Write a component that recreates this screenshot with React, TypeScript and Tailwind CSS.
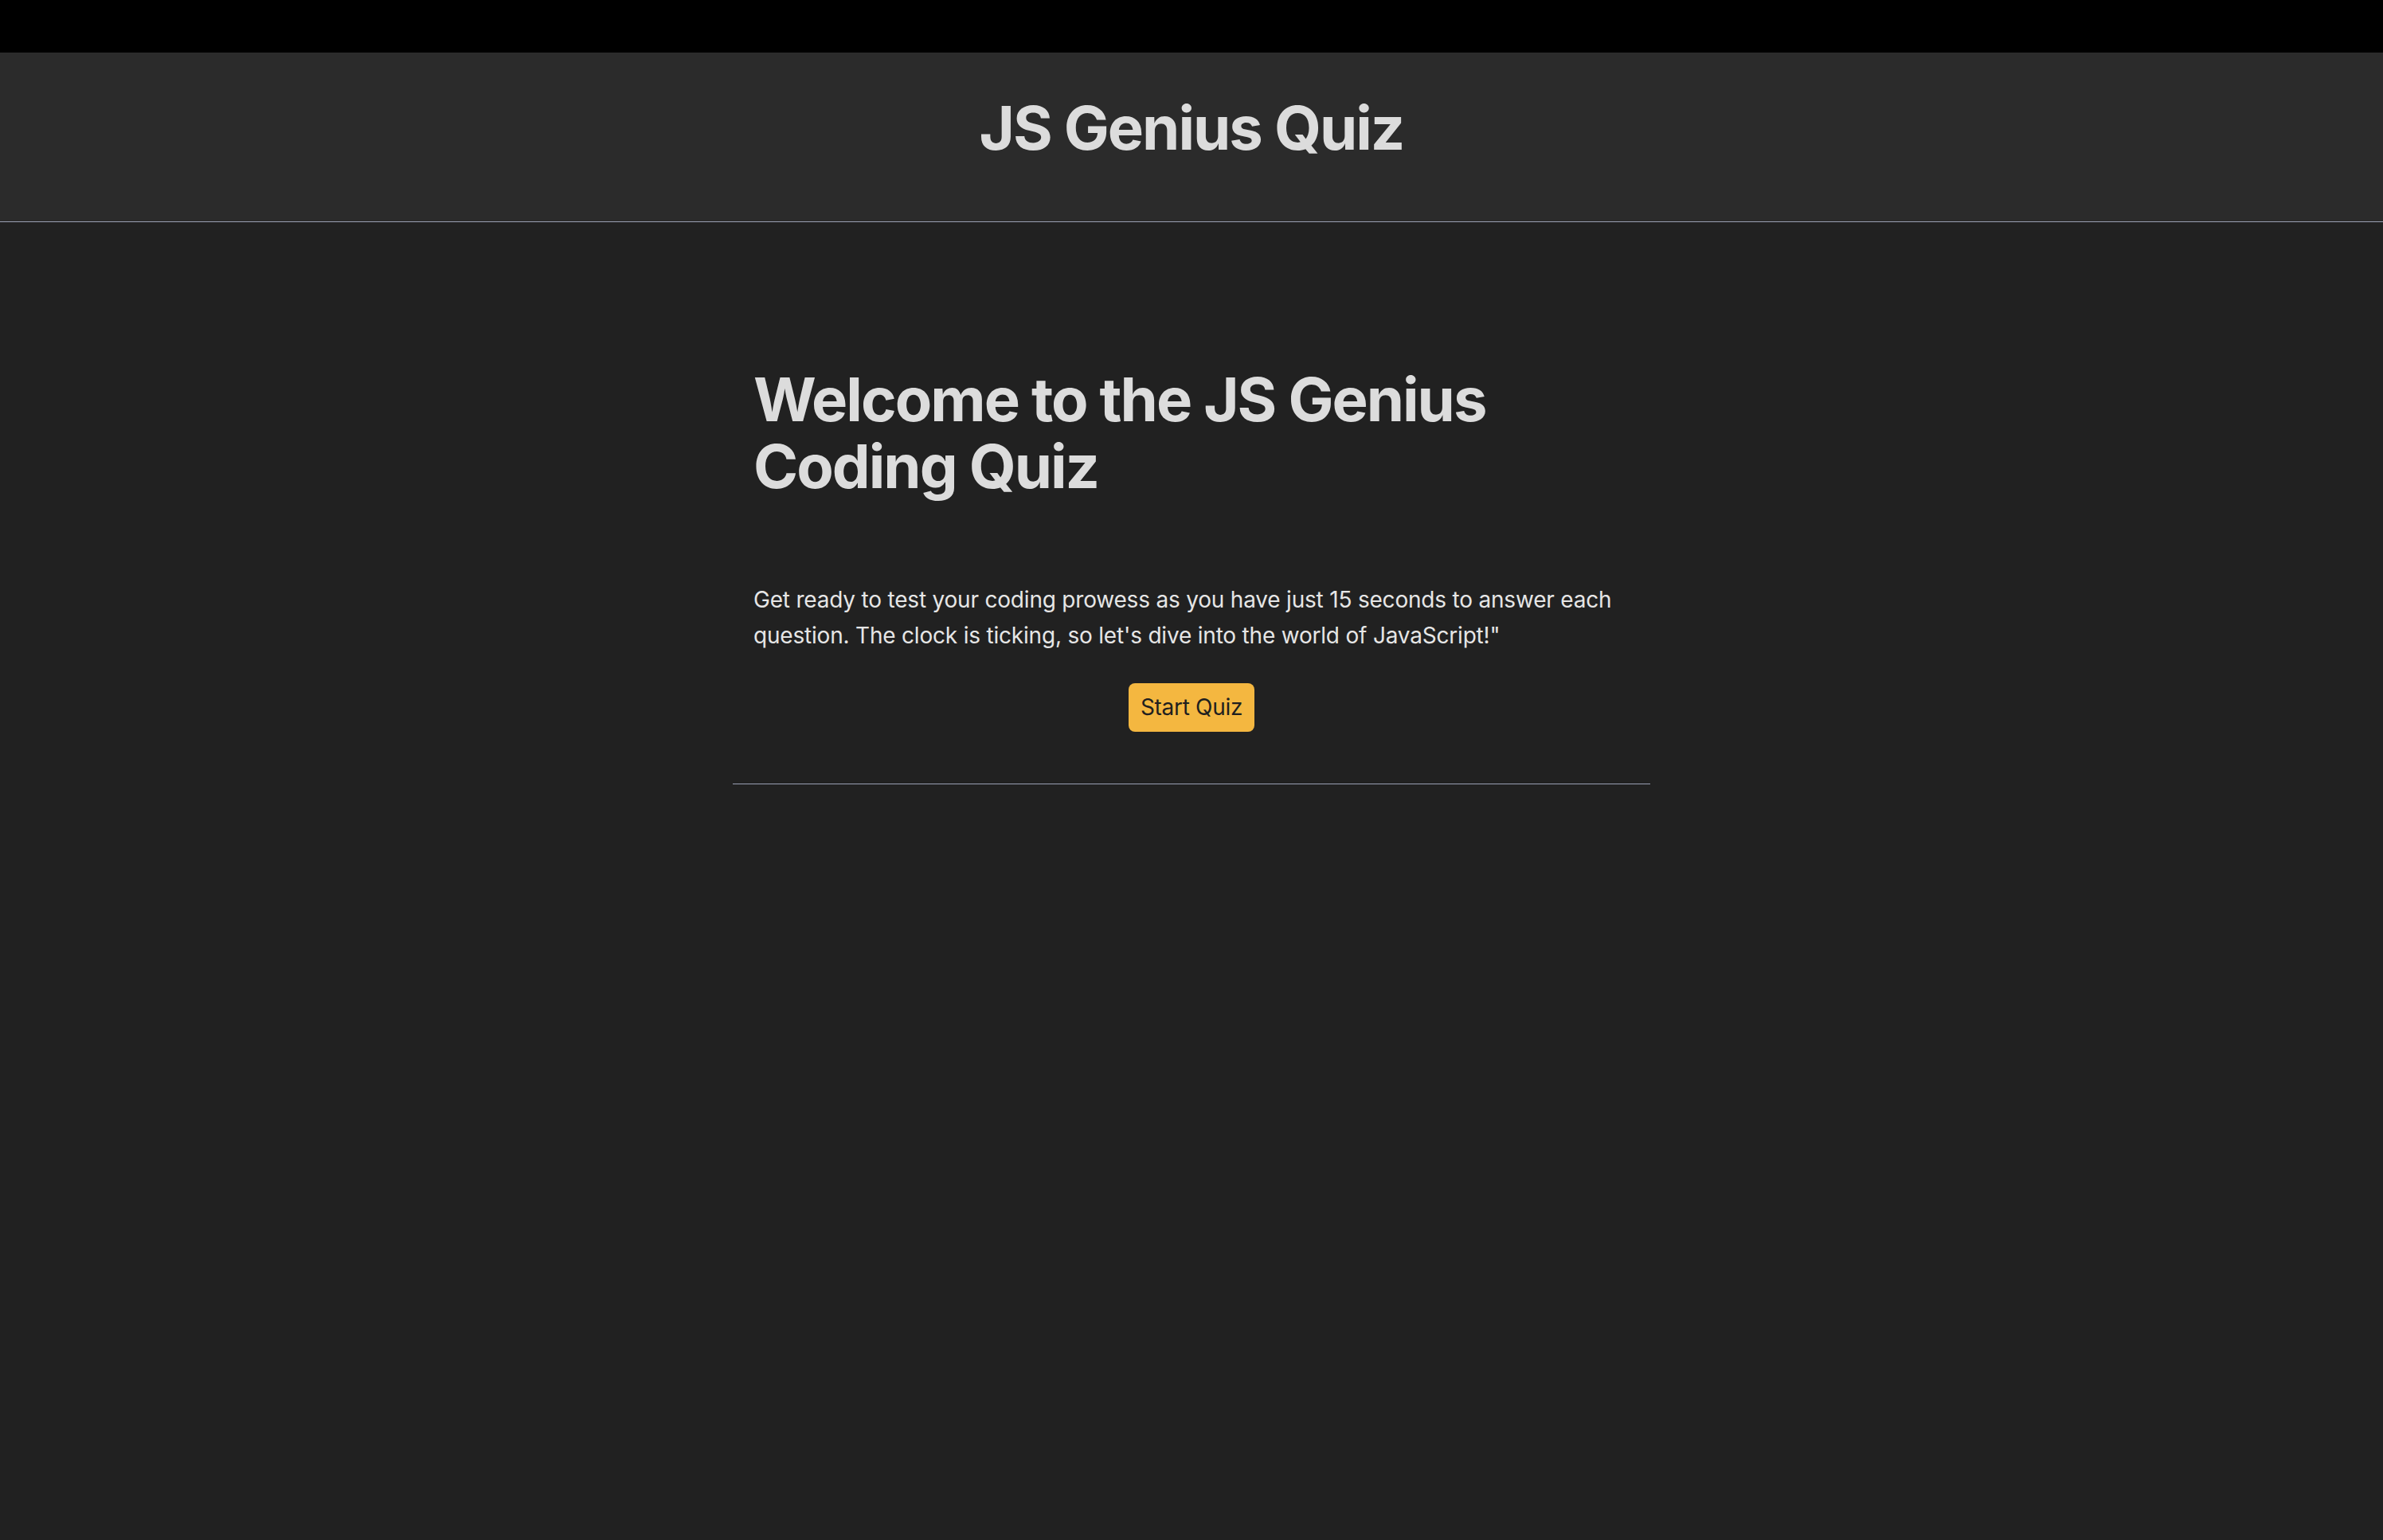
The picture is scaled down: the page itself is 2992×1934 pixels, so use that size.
import React from "react";

export default function App() {
  return (
    <div className="min-h-screen w-full bg-[#212121] font-['Inter',sans-serif]">
      <div className="h-[66px] bg-black" />
      <header className="bg-[#2b2b2b] border-b border-[#9a9fb3] pt-[49px] pb-[72px] text-center">
        <h1 className="text-[76px] leading-[91px] font-bold text-[#dcdcdc] tracking-[-2px]">JS Genius Quiz</h1>
      </header>
      <main className="flex justify-center pt-[180px]">
        <div className="w-[1152px] border-b border-[#9a9fb3] px-[26px] pb-[65px]">
          <h2 className="text-[76px] leading-[84px] font-bold text-[#dcdcdc] tracking-[-2px] w-[1000px]">
            Welcome to the JS Genius Coding Quiz
          </h2>
          <p className="mt-[104px] text-[28px] leading-[45px] text-[#e6e6e6] tracking-[-0.2px]">
            Get ready to test your coding prowess as you have just 15 seconds to answer each question. The clock is ticking, so let's dive into the world of JavaScript!"
          </p>
          <div className="mt-[37px] flex justify-center">
            <button className="h-[61px] px-[15px] rounded-[8px] bg-[#f4b740] text-[#1f1f1f] text-[28px] leading-[61px] tracking-[-0.3px]">
              Start Quiz
            </button>
          </div>
        </div>
      </main>
    </div>
  );
}
